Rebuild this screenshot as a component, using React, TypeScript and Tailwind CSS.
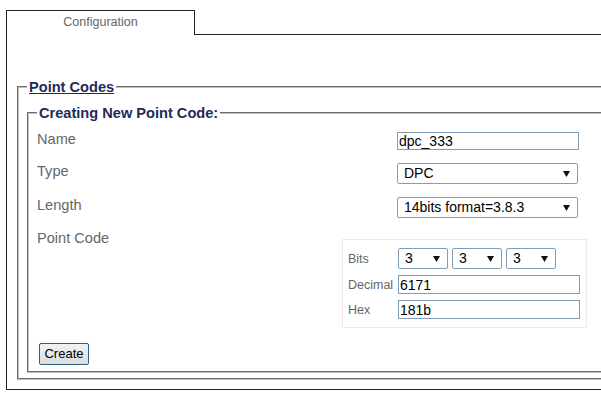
import React from "react";

function Sel({ w, value }: { w: string; value: string }) {
  return (
    <div className={`relative ${w}`}>
      <select
        className="appearance-none block w-full h-[21px] border border-[#7f9db9] rounded-[2px] bg-white pl-[6px] text-[14px] leading-[19px] text-black outline-none"
        defaultValue={value}
      >
        <option>{value}</option>
      </select>
      <svg
        className="absolute right-[8px] top-[8px] pointer-events-none"
        width="7"
        height="6"
        viewBox="0 0 7 6"
      >
        <path d="M0 0H7L3.5 6Z" fill="#111" />
      </svg>
    </div>
  );
}

function Inp({ value, h }: { value: string; h: string }) {
  return (
    <input
      readOnly
      value={value}
      className={`block w-[182px] ${h} border border-[#7f9db9] bg-white px-[1px] text-[14px] text-black outline-none`}
    />
  );
}

export default function App() {
  return (
    <div className="w-[601px] h-[401px] overflow-hidden bg-white font-['Liberation_Sans',Arial,sans-serif]">
      <div className="pt-[10px] pl-[6px] w-[660px]">
        <div className="flex">
          <div className="w-[189px] h-[25px] border border-b-0 border-[#222] pt-[4px] text-center text-[12.5px] leading-[14px] text-[#666]">
            Configuration
          </div>
          <div className="flex-1 h-[25px] border-b border-[#222]" />
        </div>
        <div className="h-[355px] border border-t-0 border-[#222] pl-[10px] pt-[44px]">
          <fieldset className="border-2 [border-style:groove] border-[#c0c0c0] pl-[8px] pt-[10px] pb-[5px]">
            <legend className="px-[2px] text-[14.6px] leading-[16px] font-bold text-[#1e2b5a] underline">
              Point Codes
            </legend>
            <fieldset className="border-2 [border-style:groove] border-[#c0c0c0] pl-[8px] pt-[10px] pb-[6px]">
              <legend className="px-[2px] text-[14.6px] leading-[16px] font-bold text-[#1e2b5a]">
                Creating New Point Code:
              </legend>
              <div className="flex flex-col text-[14.6px] leading-[16px] text-[#666]">
                <div className="flex items-start h-[32px]">
                  <div className="w-[360px]">Name</div>
                  <div className="mt-[1px]">
                    <Inp value="dpc_333" h="h-[18px]" />
                  </div>
                </div>
                <div className="flex items-start h-[34px]">
                  <div className="w-[360px]">Type</div>
                  <Sel w="w-[181px]" value="DPC" />
                </div>
                <div className="flex items-start h-[33px]">
                  <div className="w-[360px]">Length</div>
                  <Sel w="w-[181px]" value="14bits format=3.8.3" />
                </div>
                <div className="flex items-start">
                  <div className="w-[305px]">Point Code</div>
                  <div className="mt-[9px] w-[245px] border border-[#ebebeb] pl-[5px] pt-[8px] pb-[8px] flex flex-col gap-[6px] text-[12.5px] text-[#666]">
                    <div className="flex items-center">
                      <div className="w-[50px]">Bits</div>
                      <div className="flex gap-[4px]">
                        <Sel w="w-[50px]" value="3" />
                        <Sel w="w-[50px]" value="3" />
                        <Sel w="w-[50px]" value="3" />
                      </div>
                    </div>
                    <div className="flex items-center">
                      <div className="w-[50px]">Decimal</div>
                      <Inp value="6171" h="h-[19px]" />
                    </div>
                    <div className="flex items-center">
                      <div className="w-[50px]">Hex</div>
                      <Inp value="181b" h="h-[19px]" />
                    </div>
                  </div>
                </div>
                <div className="mt-[15px] ml-[2px]">
                  <button className="w-[50px] h-[22px] border border-[#2d5f8b] rounded-[2px] bg-gradient-to-b from-[#f2f2f2] to-[#dddddd] text-[13px] leading-[18px] text-black">
                    Create
                  </button>
                </div>
              </div>
            </fieldset>
          </fieldset>
        </div>
      </div>
    </div>
  );
}
